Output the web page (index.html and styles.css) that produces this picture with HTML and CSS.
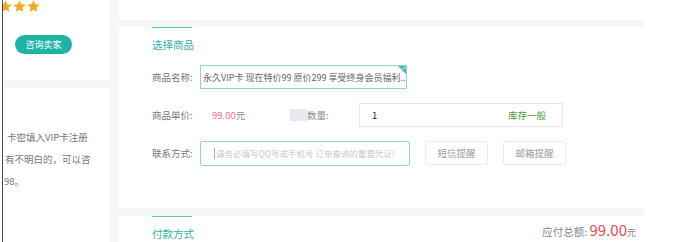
FILE: index.html
```html
<!DOCTYPE html>
<html lang="zh-CN">
<head>
  <meta charset="UTF-8" />
  <title>选择商品</title>
  <link rel="stylesheet" href="styles.css">
</head>
<body>
  <div class="side">
    <div class="side-top">
      <div class="stars">
        <svg class="star" viewBox="0 0 24 24"><path d="M12 0.5l3.4 7.3 7.9.9-5.9 5.4 1.6 7.8L12 18l-7 3.9 1.6-7.8L.7 8.7l7.9-.9z"/></svg>
        <svg class="star" viewBox="0 0 24 24"><path d="M12 0.5l3.4 7.3 7.9.9-5.9 5.4 1.6 7.8L12 18l-7 3.9 1.6-7.8L.7 8.7l7.9-.9z"/></svg>
        <svg class="star" viewBox="0 0 24 24"><path d="M12 0.5l3.4 7.3 7.9.9-5.9 5.4 1.6 7.8L12 18l-7 3.9 1.6-7.8L.7 8.7l7.9-.9z"/></svg>
      </div>
      <div class="seller">
        <button class="ask">咨询卖家</button>
      </div>
    </div>
    <div class="side-body">
      <p class="l1">卡密填入VIP卡注册</p>
      <p class="l2">有不明白的，可以咨</p>
      <p class="l3">98。</p>
    </div>
  </div>

  <div class="main">
    <div class="card card-head"></div>

    <div class="card card-goods">
      <div class="title">选择商品</div>
      <div class="row">
        <span class="label">商品名称:</span>
        <div class="field field-name">
          永久VIP卡 现在特价99 原价299 享受终身会员福利...
          <span class="tick"><svg width="10" height="10" viewBox="0 0 10 10"><path d="M0 0H10V10Z" fill="#3fbdb2"/><path d="M5.3 3.2l1.3 1.2 2.2-2.4" fill="none" stroke="#fff" stroke-width="0.9"/></svg></span>
        </div>
      </div>
      <div class="row">
        <span class="label">商品单价:</span>
        <span class="price">99.00<em>元</em></span>
        <span class="blur"></span>
        <span class="qty-label">数量:</span>
        <div class="field field-qty">
          <span>1</span>
          <span class="stock">库存一般</span>
        </div>
      </div>
      <div class="row">
        <span class="label">联系方式:</span>
        <div class="field field-contact"><i class="caret"></i>请务必填写QQ号或手机号 订单查询的重要凭证!</div>
        <button class="notify">短信提醒</button>
        <button class="notify">邮箱提醒</button>
      </div>
    </div>

    <div class="card card-pay">
      <div class="title">付款方式</div>
      <div class="total">应付总额: <b>99.00</b><small>元</small></div>
    </div>
  </div>
</body>
</html>
```

FILE: styles.css
```css
* {
  box-sizing: border-box;
  font-family: "Noto Sans CJK SC", "Noto Sans", sans-serif;
}
body {
  margin: 0;
  background: #fff;
  display: flex;
  height: 242px;
  overflow: hidden;
  color: #666;
}
.side {
  width: 108px;
  display: flex;
  flex-direction: column;
  background: #f6f6f7;
  border-left: 1px solid #4a4a4a;
  margin-left: 2px;
  overflow: hidden;
}
.side-top {
  height: 80px;
  flex-shrink: 0;
  background: #fff;
}
.stars {
  display: flex;
  gap: 1px;
  margin-left: -4px;
  height: 13px;
}
.star {
  width: 13px;
  height: 13px;
  fill: #f7a823;
}
.seller {
  margin-top: 16px;
  padding-left: 12px;
}
.ask {
  background: #1fb3a6;
  color: #fff;
  border: none;
  border-radius: 10px;
  height: 19px;
  width: 57px;
  padding: 0;
  font-size: 9px;
}
.side-body {
  flex: 1;
  background: #fff;
  margin-top: 8px;
  padding-top: 38px;
}
.side-body p {
  margin: 0;
  font-size: 9.5px;
  line-height: 22px;
  color: #777;
  white-space: nowrap;
}
.side-body .l1 {
  padding-left: 4px;
}
.side-body .l2 {
  padding-left: 2px;
}
.side-body .l3 {
  padding-left: 1px;
}
.main {
  width: 534px;
  background: #f6f6f7;
  padding-left: 9px;
  display: flex;
  flex-direction: column;
  gap: 7px;
  overflow: hidden;
}
.card {
  background: #fff;
  padding-left: 33px;
  flex-shrink: 0;
}
.card-head {
  height: 20px;
}
.card-goods {
  height: 181px;
  margin-bottom: 1px;
}
.title {
  width: 40px;
  border-top: 1px solid #5cc6bd;
  color: #2fb0a5;
  font-size: 10.5px;
  padding-top: 9px;
  line-height: 16px;
  white-space: nowrap;
}
.row {
  display: flex;
  align-items: center;
  height: 24px;
  font-size: 9.5px;
}
.card .title + .row {
  margin-top: 12px;
}
.row + .row {
  margin-top: 14px;
}
.label {
  width: 48px;
  color: #777;
  font-size: 9.5px;
}
.field {
  height: 24px;
  border: 1px solid #e8e8e8;
  display: flex;
  align-items: center;
  white-space: nowrap;
  overflow: hidden;
}
.field-name {
  position: relative;
  width: 207px;
  border-color: #8fd5ce;
  padding-left: 2px;
  font-size: 9px;
  color: #666;
}
.tick {
  position: absolute;
  top: -1px;
  right: -1px;
  line-height: 0;
}
.price {
  width: 90px;
  padding-left: 12px;
  color: #ee7479;
  font-size: 9.5px;
}
.price em {
  font-style: normal;
  color: #888;
}
.blur {
  width: 17px;
  height: 12px;
  background: #e8e8ee;
}
.qty-label {
  width: 52px;
  color: #888;
}
.field-qty {
  width: 204px;
  justify-content: space-between;
  padding: 0 16px 0 12px;
  color: #222;
  font-size: 9.5px;
}
.stock {
  color: #4d9a3f;
}
.field-contact {
  width: 210px;
  height: 25px;
  border-color: #8fd5ce;
  border-radius: 2px;
  padding-left: 13px;
  font-size: 8.5px;
  color: #c6c9cc;
}
.caret {
  width: 1px;
  height: 11px;
  background: #aaa;
  margin-right: 1px;
}
.notify {
  width: 63px;
  height: 24px;
  margin-left: 15px;
  background: #fff;
  border: 1px solid #ececec;
  border-radius: 2px;
  color: #999;
  font-size: 9.5px;
  padding: 0;
}
.card-pay {
  flex: 1 0 auto;
  display: flex;
  justify-content: space-between;
  padding-right: 8px;
}
.card-pay .title {
  padding-top: 9px;
}
.total {
  padding-top: 6px;
  font-size: 10.5px;
  line-height: 16px;
  color: #888;
  white-space: nowrap;
}
.total b {
  font-weight: normal;
  font-size: 15px;
  line-height: 16px;
  color: #e64a57;
}
.total small {
  font-size: 9px;
  color: #888;
}
```
